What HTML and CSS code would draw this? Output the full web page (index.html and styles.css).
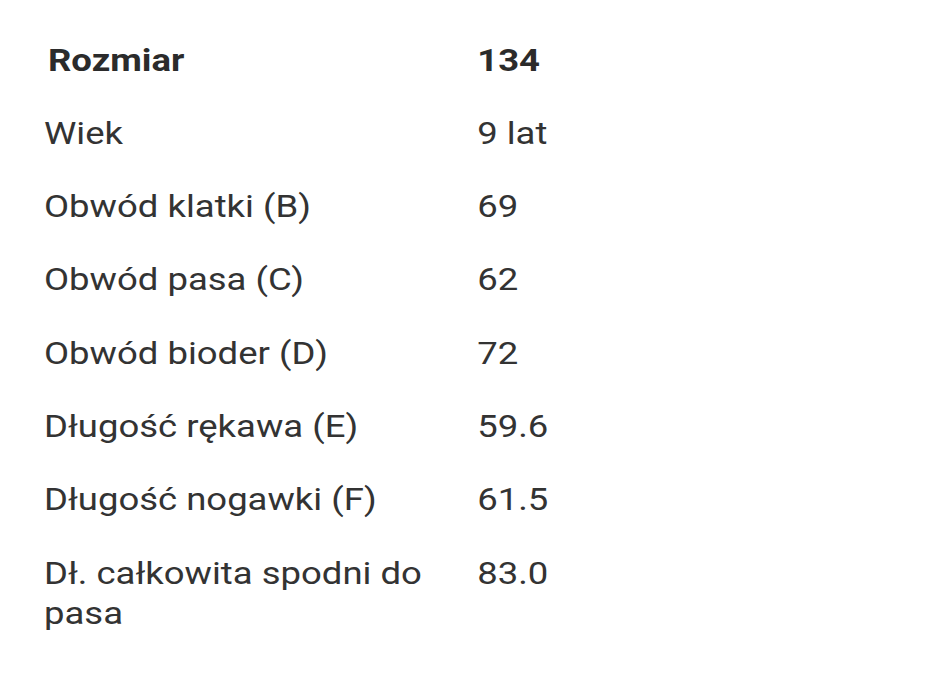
FILE: index.html
```html
<!DOCTYPE html>
<html lang="pl">
<head>
<meta charset="utf-8">
<title>Rozmiar 134</title>
<link rel="stylesheet" href="styles.css">
</head>
<body>
<table class="sizes">
  <thead>
    <tr><th class="label">Rozmiar</th><th class="value">134</th></tr>
  </thead>
  <tbody>
    <tr><td class="label">Wiek</td><td class="value">9 lat</td></tr>
    <tr><td class="label">Obwód klatki (B)</td><td class="value">69</td></tr>
    <tr><td class="label">Obwód pasa (C)</td><td class="value">62</td></tr>
    <tr><td class="label">Obwód bioder (D)</td><td class="value">72</td></tr>
    <tr><td class="label">Długość rękawa (E)</td><td class="value">59.6</td></tr>
    <tr><td class="label">Długość nogawki (F)</td><td class="value">61.5</td></tr>
    <tr><td class="label">Dł. całkowita spodni do pasa</td><td class="value">83.0</td></tr>
  </tbody>
</table>
</body>
</html>
```

FILE: styles.css
```css
html, body {
  margin: 0;
  background: #ffffff;
}
body {
  padding: 23px 0 0 44px;
  font-family: Roboto, "Noto Sans", sans-serif;
  color: #333333;
}
.sizes {
  border-collapse: collapse;
  font-size: 32px;
  line-height: 40px;
  transform: scaleX(1.14);
  transform-origin: left top;
}
.sizes th,
.sizes td {
  padding: 16.65px 0;
  text-align: left;
  vertical-align: top;
}
.sizes th {
  font-weight: 700;
  color: #2b2b2b;
}
.sizes .label {
  width: 380px;
}
.sizes th.label {
  padding-left: 3.5px;
  width: 376.5px;
}
.sizes .value {
  width: 150px;
}
```
